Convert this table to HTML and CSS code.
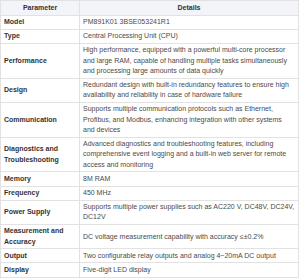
FILE: index.html
```html
<!DOCTYPE html>
<html lang="en">
<head>
  <meta charset="UTF-8" />
  <title>PM891K01 Specifications</title>
  <link rel="stylesheet" href="styles.css">
</head>
<body>
  <table class="spec-table">
    <thead>
      <tr>
        <th class="param-col">Parameter</th>
        <th>Details</th>
      </tr>
    </thead>
    <tbody>
      <tr><td class="param">Model</td><td>PM891K01 3BSE053241R1</td></tr>
      <tr><td class="param">Type</td><td>Central Processing Unit (CPU)</td></tr>
      <tr><td class="param">Performance</td><td>High performance, equipped with a powerful multi-core processor and large RAM, capable of handling multiple tasks simultaneously and processing large amounts of data quickly</td></tr>
      <tr><td class="param">Design</td><td>Redundant design with built-in redundancy features to ensure high availability and reliability in case of hardware failure</td></tr>
      <tr><td class="param">Communication</td><td>Supports multiple communication protocols such as Ethernet, Profibus, and Modbus, enhancing integration with other systems and devices</td></tr>
      <tr><td class="param">Diagnostics and Troubleshooting</td><td>Advanced diagnostics and troubleshooting features, including comprehensive event logging and a built-in web server for remote access and monitoring</td></tr>
      <tr><td class="param">Memory</td><td>8M RAM</td></tr>
      <tr><td class="param">Frequency</td><td>450 MHz</td></tr>
      <tr><td class="param">Power Supply</td><td>Supports multiple power supplies such as AC220 V, DC48V, DC24V, DC12V</td></tr>
      <tr><td class="param">Measurement and Accuracy</td><td>DC voltage measurement capability with accuracy ≤±0.2%</td></tr>
      <tr><td class="param">Output</td><td>Two configurable relay outputs and analog 4~20mA DC output</td></tr>
      <tr><td class="param">Display</td><td>Five-digit LED display</td></tr>
    </tbody>
  </table>
</body>
</html>
```

FILE: styles.css
```css
body {
  margin: 0;
  background-color: #fff;
  font-family: 'Liberation Sans', Arial, sans-serif;
  color: #4a4a4a;
}

.spec-table {
  width: 299px;
  border-collapse: collapse;
  font-size: 7px;
  line-height: 10.3px;
}

.spec-table th,
.spec-table td {
  border: 1px solid #e2e2e2;
  padding: 1.4px 3px;
  vertical-align: middle;
  text-align: left;
}

.spec-table th {
  background-color: #f3f4fa;
  color: #333;
  font-weight: 700;
  text-align: center;
  padding-top: 1.8px;
  padding-bottom: 1.8px;
}

.spec-table .param-col {
  width: 72px;
}

.spec-table td.param {
  font-weight: 700;
  color: #333;
}
```
